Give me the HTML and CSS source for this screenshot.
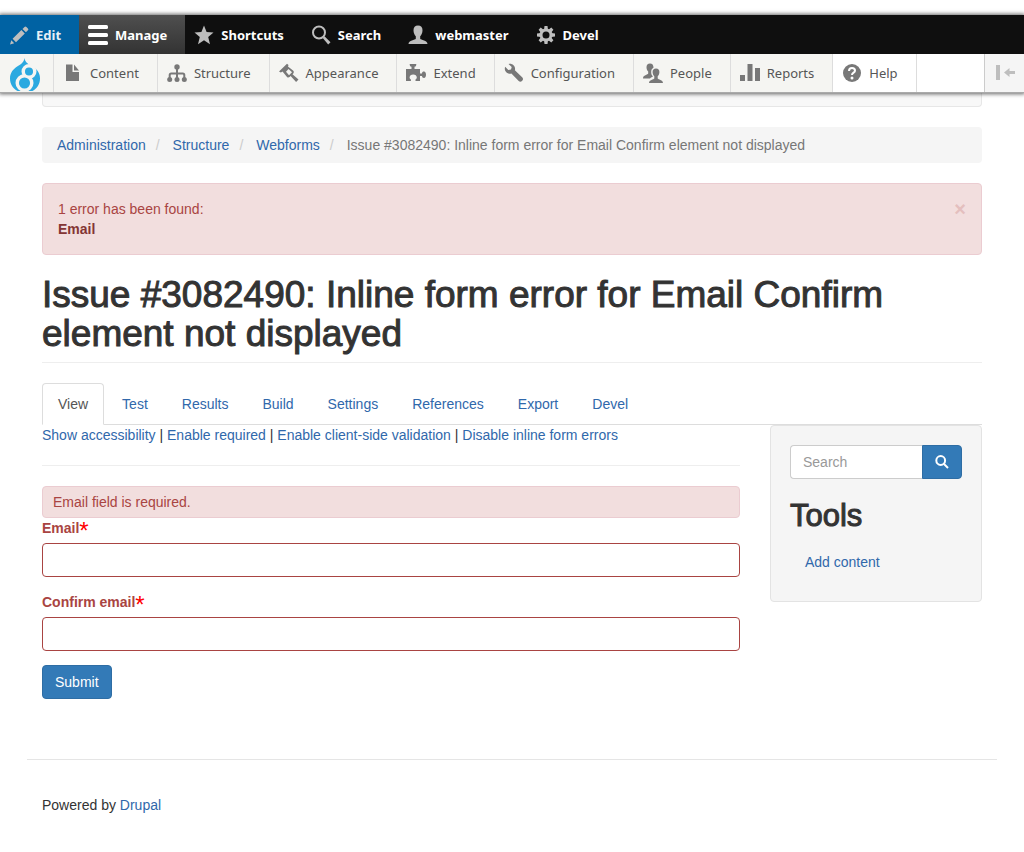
FILE: index.html
```
<!DOCTYPE html>
<html lang="en">
<head>
  <meta charset="UTF-8">
  <meta name="viewport" content="width=device-width, initial-scale=1.0">
  <title>Issue #3082490: Inline form error for Email Confirm element not displayed</title>
  <link rel="stylesheet" href="styles.css">
</head>
<body>

  <header class="toolbar">
    <nav class="toolbar-bar">
      <a href="#" class="edit">
        <svg viewBox="0 0 20 20"><path d="M1 19.500l1.300-4.200 2.900 2.900zM3.600 13.800l8.800-8.800 3.400 3.400-8.800 8.800zM13.500 3.900l2-2a1.300 1.300 0 0 1 1.900 0l1.500 1.500a1.300 1.300 0 0 1 0 1.900l-2 2z"/></svg>
        Edit
      </a>
      <a href="#" class="active">
        <svg viewBox="0 0 20 20"><rect y="0" width="20" height="4" rx="1.500"/><rect y="8" width="20" height="4" rx="1.500"/><rect y="16" width="20" height="4" rx="1.500"/></svg>
        Manage
      </a>
      <a href="#">
        <svg viewBox="0 0 20 20"><path d="M10 .5l2.600 6.600 6.900.4-5.300 4.600 1.800 7.100-6-3.900-6 3.900 1.800-7.100L.5 7.500l6.900-.4z"/></svg>
        Shortcuts
      </a>
      <a href="#">
        <svg viewBox="0 0 20 20"><circle class="line" cx="8" cy="7.500" r="6"/><path d="M11.700 13l1.800-1.800 6 6-2.300 2.300z"/></svg>
        Search
      </a>
      <a href="#">
        <svg viewBox="0 0 20 20"><path d="M10 .5c-3 0-4.500 2-4.500 4.800 0 2.700 1.100 4.900 2.300 5.900v2.500c-.5 1.300-7.300 1.300-7.300 5.300h19c0-4-6.800-4-7.300-5.300v-2.500c1.200-1 2.300-3.200 2.300-5.900C14.500 2.500 13 .5 10 .5z"/></svg>
        webmaster
      </a>
      <a href="#">
        <svg viewBox="0 0 20 20"><circle class="gear" cx="10" cy="10" r="5"/><path d="M8.500 1h3l.5 4H8zM8.500 19h3l.5-4H8zM1 8.500v3l4 .5V8zM19 8.500v3l-4 .5V8zM2.600 4.700l2.100-2.100 3.200 2.500-2.800 2.800zM17.400 4.700l-2.100-2.100-3.200 2.500 2.800 2.800zM2.600 15.300l2.100 2.100 3.200-2.500-2.800-2.800zM17.400 15.300l-2.100 2.100-3.200-2.500 2.800-2.800z"/></svg>
        Devel
      </a>
    </nav>

    <nav class="toolbar-tray">
      <a href="#" class="home" aria-label="Home">
        <svg viewBox="0 0 30 34"><path d="M14.500 0c.5 4 3 5.500 6 7.200C25.500 10 30 13.500 30 20.500c0 5.500-3 10-7.500 12.500h-15C3 30.500 0 26 0 20.500c0-6 3.500-9.500 7.500-12.200C11 6.200 13.800 4.500 14.500 0z"/><circle class="ring" cx="14.500" cy="25" r="7"/><circle class="ring" cx="19" cy="13.500" r="5.500"/><circle cx="14.500" cy="25" r="5.500"/><circle cx="19" cy="13.500" r="4"/></svg>
      </a>
      <a href="#">
        <svg viewBox="0 0 20 20"><path d="M3 1.500h6.500V9H16v9H3zM11 1.500L16 7.500h-5z"/></svg>
        Content
      </a>
      <a href="#">
        <svg viewBox="0 0 20 20"><circle cx="10" cy="4" r="2.700"/><circle cx="2.700" cy="16.500" r="2.500"/><circle cx="10" cy="16.500" r="2.500"/><circle cx="17.300" cy="16.500" r="2.500"/><path class="line" d="M10 5v11M2.700 16v-4q0-1.500 1.500-1.500h11.600q1.500 0 1.500 1.500v4"/></svg>
        Structure
      </a>
      <a href="#">
        <svg viewBox="0 0 20 20"><path fill-rule="evenodd" d="M0 8.500L8 .8l1.500 1.300-.5 1.300 5.300 4.400c.8.800.6 1.800 0 2.600l-.8.900 6 5.300-2.400 2.400-5.500-5.900-1 .9c-.9.700-1.900.6-2.600-.1L3.500 8.600l-1.600.9zM7 8.800l3 3.400 3-2.900L9.500 6z"/></svg>
        Appearance
      </a>
      <a href="#">
        <svg viewBox="0 0 20 20"><path d="M0 6h5.500V3.800C4 3.800 3.700 2.500 3.700 1h6.600c0 1.500-.3 2.800-1.800 2.800V6H14v4.500h2c0-1.500.8-2 2-2 1.300 0 2 1.300 2 3.200s-.7 3.300-2 3.300c-1.200 0-2-.7-2-2h-2V18H9.500v-1.500c1-.5 1.300-1.300 1.300-2 0-1.700-1.500-3-3.600-3s-3.600 1.300-3.600 3c0 .7.300 1.500 1.300 2V18H0z"/></svg>
        Extend
      </a>
      <a href="#">
        <svg viewBox="0 0 20 20"><path d="M5.500.8c2.900-.2 5.600 2 5.600 5.200l-.2 1.200 7.500 7.300c2 2.400-1.400 5.600-3.700 3.600L7.400 10.600C4 11.500.6 9 .8 5.500c0-.7.200-1.300.4-1.800l3.100 3.200L7 6.500l.7-2.500L4.500.9z"/></svg>
        Configuration
      </a>
      <a href="#">
        <svg viewBox="0 0 20 20"><path d="M7 .5c-2.300 0-3.500 1.500-3.500 3.700 0 1.900.7 3.500 1.700 4.400v2C4.800 12 0 12 0 15.500h7c.8-1 2.500-1.600 3-2.300C8.500 12.500 8.200 10.500 8.200 9c0-2 .8-3.500 2.300-4.200C10.500 2 9.300.5 7 .5z"/><path d="M13 5.500c-2.300 0-3.400 1.500-3.400 3.500 0 1.900.8 3.500 1.700 4.300v2.200c-.5 1-5.300 1.200-5.300 4.500h14c0-3.300-4.800-3.500-5.300-4.500v-2.200c1-.8 1.700-2.400 1.700-4.300 0-2-1.100-3.500-3.400-3.500z"/></svg>
        People
      </a>
      <a href="#">
        <svg viewBox="0 0 20 20"><rect y="12" width="5" height="6"/><rect x="7.500" y="1" width="5" height="17"/><rect x="15" y="5" width="5" height="13"/></svg>
        Reports
      </a>
      <a href="#" class="help">
        <svg viewBox="0 0 20 20"><circle cx="10" cy="10" r="9"/><path class="question" d="M7 8q0-3 3-3t3 2.700c0 2-3 2-3 4.300"/><circle class="dot" cx="10" cy="15" r="1.500"/></svg>
        Help
      </a>
      <button type="button" class="orientation" aria-label="Vertical orientation">
        <svg viewBox="0 0 20 20"><path d="M1 2h4v15H1zM9 9.500L14.500 5v3H20v3h-5.500v3z"/></svg>
      </button>
    </nav>
  </header>

  <div class="container">
    <div class="navbar"></div>

    <ol class="breadcrumb">
      <li><a href="#">Administration</a></li>
      <li><a href="#">Structure</a></li>
      <li><a href="#">Webforms</a></li>
      <li>Issue #3082490: Inline form error for Email Confirm element not displayed</li>
    </ol>

    <div class="alert" role="alert">
      <p>1 error has been found:<br><a href="#email">Email</a></p>
      <button type="button" aria-label="Close">×</button>
    </div>

    <h1>Issue #3082490: Inline form error for Email Confirm element not displayed</h1>

    <nav class="tabs">
      <a href="#" class="active">View</a>
      <a href="#">Test</a>
      <a href="#">Results</a>
      <a href="#">Build</a>
      <a href="#">Settings</a>
      <a href="#">References</a>
      <a href="#">Export</a>
      <a href="#">Devel</a>
    </nav>

    <div class="row">
      <main class="content">
        <a href="#">Show accessibility</a> | <a href="#">Enable required</a> | <a href="#">Enable client-side validation</a> | <a href="#">Disable inline form errors</a>
        <hr>
        <form>
          <div class="form-error">Email field is required.</div>
          <div class="form-item">
            <label for="email">Email<span>*</span></label>
            <input type="email" id="email">
          </div>
          <div class="form-item">
            <label for="confirm">Confirm email<span>*</span></label>
            <input type="email" id="confirm">
          </div>
          <button type="submit" class="btn">Submit</button>
        </form>
      </main>

      <aside class="sidebar">
        <div class="well">
          <form class="search">
            <input type="search" placeholder="Search" aria-label="Search">
            <button type="submit" class="btn" aria-label="Search">
              <svg viewBox="0 0 14 14"><circle cx="5.700" cy="5.500" r="4.400"/><path d="M9 9l4 4"/></svg>
            </button>
          </form>
          <h2>Tools</h2>
          <ul>
            <li><a href="#">Add content</a></li>
          </ul>
        </div>
      </aside>
    </div>
  </div>

  <footer class="footer">Powered by <a href="#">Drupal</a></footer>

</body>
</html>
```
FILE: styles.css
```
* {
  box-sizing: border-box;
}

body {
  margin: 0;
  padding-top: 15px;
  background-color: #fff;
  color: #333;
  font-family: "Liberation Sans", Arial, sans-serif;
  font-size: 14px;
  line-height: 20px;
}

a {
  color: #3068ab;
  text-decoration: none;
}

/* Admin toolbar */
.toolbar {
  position: relative;
  font-family: "Noto Sans", sans-serif;
  font-size: 13px;
  box-shadow: 0 0 4px 1px rgba(0, 0, 0, 0.6);
}

.toolbar-bar,
.toolbar-tray {
  display: flex;
  height: 39px;
}

.toolbar-bar {
  background-color: #0f0f0f;
}

.toolbar a {
  display: flex;
  align-items: center;
  gap: 7px;
  padding: 0 18px 0 9px;
}

.toolbar svg {
  width: 20px;
  height: 20px;
}

.toolbar .line {
  fill: none;
  stroke-width: 2;
}

.toolbar-bar a {
  color: #fff;
  font-weight: bold;
}

.toolbar-bar svg {
  fill: #bebebe;
  stroke: none;
}

.toolbar-bar .line {
  stroke: #bebebe;
}

.toolbar-bar .gear {
  fill: none;
  stroke: #bebebe;
  stroke-width: 3;
}

.toolbar-bar .edit {
  background-color: #0062a3;
  color: #e6eff6;
}

.toolbar-bar .active {
  background-image: linear-gradient(#4f4f4f, #333);
}

.toolbar-bar .active svg {
  fill: #fff;
}

.toolbar-tray {
  background-color: #fff;
  border-bottom: 1px solid #aaa;
}

.toolbar-tray a {
  background-color: #f5f5f2;
  border-right: 1px solid #ddd;
  color: #565656;
}

.toolbar-tray svg {
  fill: #787878;
}

.toolbar-tray .line {
  stroke: #787878;
}

.toolbar-tray .home {
  padding: 3px 13px 0 10px;
}

.home svg {
  width: 30px;
  height: 34px;
  fill: #2ba9e0;
}

.home .ring {
  fill: none;
  stroke: #f5f5f2;
  stroke-width: 4;
}

.toolbar-tray .help {
  background-color: #fff;
}

.help .question {
  fill: none;
  stroke: #fff;
  stroke-width: 2;
}

.help .dot {
  fill: #fff;
}

.orientation {
  width: 40px;
  margin-left: auto;
  padding: 0 9px;
  border: 0;
  border-left: 1px solid #ccc;
  background-color: #f5f5f5;
  line-height: 0;
  cursor: pointer;
}

.orientation svg {
  fill: #bebebe;
}

/* Page */
.container {
  max-width: 970px;
  margin: 0 auto;
  padding: 0 15px;
}

.navbar {
  height: 14px;
  margin-bottom: 20px;
  background-color: #f8f8f8;
  border: 1px solid #e7e7e7;
  border-top: 0;
  border-radius: 0 0 4px 4px;
}

.breadcrumb {
  display: flex;
  margin: 0 0 20px;
  padding: 8px 15px;
  list-style: none;
  background-color: #f5f5f5;
  border-radius: 4px;
  color: #777;
}

.breadcrumb li + li::before {
  content: "/";
  margin: 0 13px 0 10px;
  color: #ccc;
}

.alert {
  display: flex;
  justify-content: space-between;
  align-items: flex-start;
  margin-bottom: 20px;
  padding: 15px;
  background-color: #f2dede;
  border: 1px solid #ebccd1;
  border-radius: 4px;
  color: #a94442;
}

.alert p {
  margin: 0;
}

.alert a {
  color: #843534;
  font-weight: bold;
}

.alert button {
  padding: 0;
  border: 0;
  background: none;
  color: #e4bfbe;
  font-family: inherit;
  font-size: 20px;
  font-weight: bold;
  line-height: 20px;
  cursor: pointer;
}

h1,
h2 {
  font-weight: 500;
  -webkit-text-stroke: 1px;
}

h1 {
  margin: 0 0 20px;
  padding-bottom: 9px;
  border-bottom: 1px solid #eee;
  font-size: 37px;
  line-height: 39px;
}

.tabs {
  display: flex;
  gap: 2px;
  border-bottom: 1px solid #ddd;
}

.tabs a {
  margin-bottom: -1px;
  padding: 10px 15px;
  border: 1px solid transparent;
  border-radius: 4px 4px 0 0;
}

.tabs .active {
  background-color: #fff;
  border-color: #ddd #ddd #fff;
  color: #555;
}

.row {
  display: flex;
  gap: 30px;
}

.content {
  flex: 1;
}

hr {
  margin: 20px 0;
  border: 0;
  border-top: 1px solid #eee;
}

.form-error {
  padding: 5px 10px;
  background-color: #f2dede;
  border: 1px solid #ebccd1;
  border-radius: 4px;
  color: #a94442;
}

.form-item {
  margin-bottom: 15px;
}

.form-item:last-of-type {
  margin-bottom: 14px;
}

.form-item label {
  display: block;
  margin-bottom: 5px;
  color: #a94442;
  font-weight: bold;
}

.form-item span {
  color: #f00;
  font-size: 24px;
  font-weight: normal;
  line-height: 1px;
  vertical-align: -6px;
}

input {
  display: block;
  width: 100%;
  height: 34px;
  padding: 6px 12px;
  background-color: #fff;
  border: 1px solid #ccc;
  border-radius: 4px;
  font-family: inherit;
  font-size: 14px;
}

input::placeholder {
  color: #999;
}

.form-item input {
  border-color: #a94442;
}

.btn {
  height: 34px;
  padding: 6px 12px;
  background-color: #337ab7;
  border: 1px solid #2e6da4;
  border-radius: 4px;
  color: #fff;
  font-family: inherit;
  font-size: 14px;
  line-height: 20px;
  cursor: pointer;
}

.sidebar {
  width: 212px;
}

.well {
  padding: 19px;
  background-color: #f5f5f5;
  border: 1px solid #e3e3e3;
  border-radius: 4px;
}

.search {
  display: flex;
}

.search input {
  flex: 1;
  min-width: 0;
  border-right: 0;
  border-radius: 4px 0 0 4px;
}

.search .btn {
  border-radius: 0 4px 4px 0;
}

.search svg {
  display: block;
  width: 14px;
  height: 14px;
  fill: none;
  stroke: #fff;
  stroke-width: 2;
}

h2 {
  margin: 20px 0 10px;
  font-size: 31px;
  line-height: 33px;
}

.well ul {
  margin: 0;
  padding: 0;
  list-style: none;
}

.well li a {
  display: block;
  padding: 10px 15px;
}

.footer {
  max-width: 970px;
  margin: 60px auto 0;
  padding: 35px 15px;
  border-top: 1px solid #e5e5e5;
}
```
